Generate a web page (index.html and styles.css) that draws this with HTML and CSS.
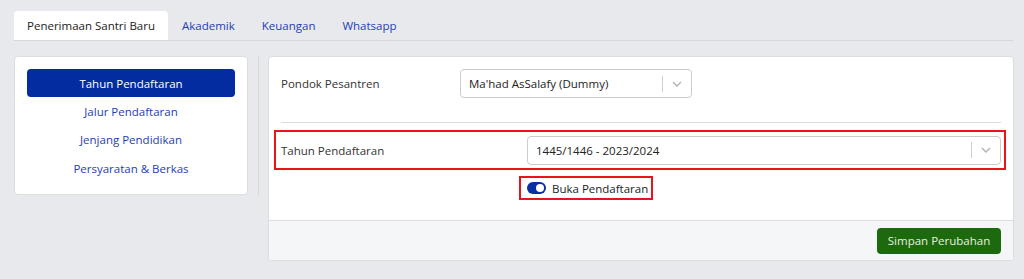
FILE: index.html
```html
<!DOCTYPE html>
<html lang="id">
<head>
  <meta charset="UTF-8" />
  <meta name="viewport" content="width=device-width, initial-scale=1.0">
  <title>Pengaturan</title>
  <link rel="stylesheet" href="styles.css">
</head>
<body>
  <div class="container">
    <div class="tabs">
      <div class="tab active">Penerimaan Santri Baru</div>
      <div class="tab">Akademik</div>
      <div class="tab">Keuangan</div>
      <div class="tab">Whatsapp</div>
    </div>

    <div class="content">
      <div class="side-menu">
        <div class="menu-item active">Tahun Pendaftaran</div>
        <div class="menu-item">Jalur Pendaftaran</div>
        <div class="menu-item">Jenjang Pendidikan</div>
        <div class="menu-item">Persyaratan &amp; Berkas</div>
      </div>

      <div class="divider"></div>

      <div class="main-card">
        <div class="card-body">
          <div class="form-row">
            <label class="form-label label-pondok">Pondok Pesantren</label>
            <div class="select select-pondok">
              <span class="select-value">Ma'had AsSalafy (Dummy)</span>
              <span class="select-sep"></span>
              <svg class="chevron" width="10" height="6" viewBox="0 0 10 6"><path d="M1 1l4 4 4-4" fill="none" stroke="#b3b3b3" stroke-width="1.4"/></svg>
            </div>
          </div>

          <hr class="separator">

          <div class="form-row highlight">
            <label class="form-label label-tahun">Tahun Pendaftaran</label>
            <div class="select select-tahun">
              <span class="select-value">1445/1446 - 2023/2024</span>
              <span class="select-sep"></span>
              <svg class="chevron" width="10" height="6" viewBox="0 0 10 6"><path d="M1 1l4 4 4-4" fill="none" stroke="#b3b3b3" stroke-width="1.4"/></svg>
            </div>
          </div>

          <div class="toggle-row">
            <div class="toggle-box">
              <span class="switch"><span class="knob"></span></span>
              <span class="toggle-label">Buka Pendaftaran</span>
            </div>
          </div>
        </div>
        <div class="card-footer">
          <button class="save-button">Simpan Perubahan</button>
        </div>
      </div>
    </div>
  </div>
</body>
</html>
```

FILE: styles.css
```css
body {
  margin: 0;
  background: #e8e9ed;
  font-family: "Open Sans", "DejaVu Sans", sans-serif;
  font-size: 11.5px;
  color: #333;
}
.container {
  padding: 11px 10px 0 14px;
}
.tabs {
  display: flex;
  width: 999px;
  height: 29px;
  border-bottom: 1px solid #d6d7db;
}
.tab {
  display: flex;
  align-items: center;
  padding: 0 13px;
  margin-right: 1px;
  color: #1e3eb3;
  border-radius: 4px 4px 0 0;
}
.tab.active {
  background: white;
  color: #222;
}
.content {
  display: flex;
  margin-top: 15px;
}
.side-menu {
  box-sizing: border-box;
  width: 234px;
  height: 139px;
  background: white;
  border: 1px solid #dcdde1;
  border-radius: 4px;
  padding: 12px 12px;
}
.menu-item {
  height: 28.5px;
  display: flex;
  align-items: center;
  justify-content: center;
  color: #1e3eb3;
}
.menu-item.active {
  height: 28px;
  background: #032ca0;
  color: white;
  border-radius: 4px;
}
.divider {
  width: 1px;
  height: 140px;
  background: #d8d9dd;
  margin: 0 9px 0 10px;
}
.main-card {
  box-sizing: border-box;
  width: 746px;
  height: 205px;
  background: white;
  border: 1px solid #dcdde1;
  border-radius: 4px;
  display: flex;
  flex-direction: column;
}
.card-body {
  flex: 1;
  padding: 12px 12px 0 12px;
}
.form-row {
  display: flex;
  align-items: center;
}
.form-label {
  color: #333;
}
.label-pondok {
  width: 179px;
}
.label-tahun {
  width: 246px;
}
.select {
  box-sizing: border-box;
  height: 29px;
  border: 1px solid #cccccc;
  border-radius: 4px;
  display: flex;
  align-items: center;
  padding-left: 8px;
  color: #222;
}
.select-pondok {
  width: 232px;
}
.select-tahun {
  width: 474px;
}
.select-value {
  flex: 1;
}
.select-sep {
  width: 1px;
  height: 16px;
  background: #d0d0d0;
}
.chevron {
  margin: 0 9px 0 9px;
}
.separator {
  border: none;
  border-top: 1px solid #dddee2;
  margin: 24px 0 7px 0;
}
.highlight {
  border: 2px solid #e8141c;
  margin: 0 -5px 0 -7px;
  padding: 4px 3px 4px 5px;
  height: 28px;
}
.toggle-row {
  display: flex;
  margin-top: 6px;
  padding-left: 238px;
}
.toggle-box {
  display: flex;
  align-items: center;
  border: 2px solid #e8141c;
  height: 20px;
  padding: 0 3px 0 6px;
}
.switch {
  position: relative;
  width: 19px;
  height: 12px;
  background: #0a2ea3;
  border-radius: 6px;
  margin-right: 6px;
}
.knob {
  position: absolute;
  right: 2px;
  top: 2px;
  width: 8px;
  height: 8px;
  border-radius: 50%;
  background: white;
}
.toggle-label {
  color: #222;
}
.card-footer {
  height: 39px;
  background: #f5f6f7;
  border-top: 1px solid #dcdde1;
  border-radius: 0 0 4px 4px;
  display: flex;
  align-items: center;
  justify-content: flex-end;
  padding-right: 12px;
}
.save-button {
  height: 26px;
  width: 124px;
  background: #1d6a0e;
  color: #e6f1df;
  border: none;
  border-radius: 4px;
  font-family: inherit;
  font-size: 11.5px;
}
```
